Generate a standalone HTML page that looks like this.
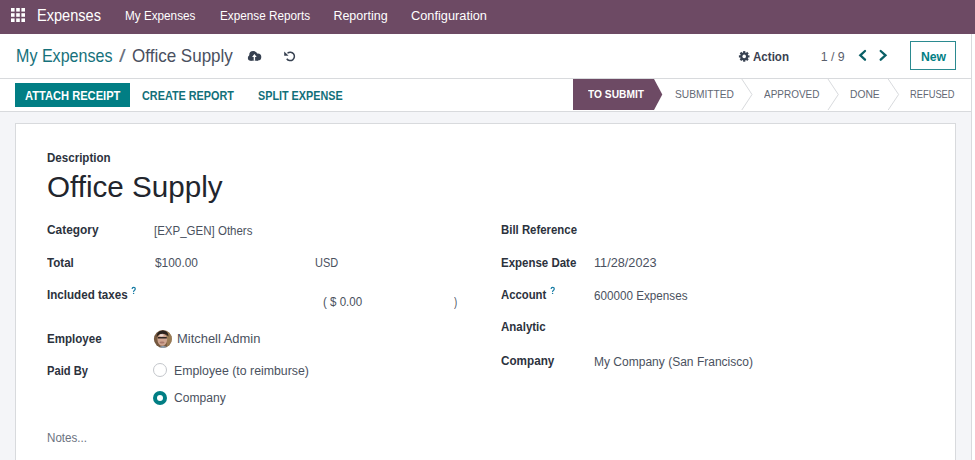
<!DOCTYPE html>
<html><head><meta charset="utf-8">
<style>
html,body{margin:0;padding:0;width:975px;height:460px;overflow:hidden;background:#fff;font-family:"Liberation Sans",sans-serif;}
.t{position:absolute;white-space:nowrap;transform-origin:0 50%;}
.a{position:absolute;}
</style></head><body>
<!-- navbar -->
<div class="a" style="left:0;top:0;width:975px;height:34px;background:#6D4A64;"></div>
<svg class="a" style="left:0;top:0" width="60" height="34">
  <g fill="#fff">
    <rect x="11" y="8" width="3.6" height="3.6"/><rect x="16.2" y="8" width="3.6" height="3.6"/><rect x="21.4" y="8" width="3.6" height="3.6"/>
    <rect x="11" y="13.2" width="3.6" height="3.6"/><rect x="16.2" y="13.2" width="3.6" height="3.6"/><rect x="21.4" y="13.2" width="3.6" height="3.6"/>
    <rect x="11" y="18.4" width="3.6" height="3.6"/><rect x="16.2" y="18.4" width="3.6" height="3.6"/><rect x="21.4" y="18.4" width="3.6" height="3.6"/>
  </g>
</svg>
<!-- control panel borders -->
<div class="a" style="left:0;top:78px;width:971px;height:1px;background:#D8DADD;"></div>
<div class="a" style="left:0;top:111px;width:971px;height:1px;background:#D8DADD;"></div>
<!-- gray background -->
<div class="a" style="left:0;top:112px;width:971px;height:348px;background:#F4F5F8;"></div>
<!-- right scrollbar line -->
<div class="a" style="left:971px;top:34px;width:1px;height:426px;background:#D8DADD;"></div>
<!-- sheet -->
<div class="a" style="left:15px;top:123px;width:939px;height:400px;background:#fff;border:1px solid #D8DADD;"></div>
<!-- icons overlay -->
<svg class="a" style="left:0;top:0" width="975" height="460" viewBox="0 0 975 460">
  <g fill="#374151">
    <circle cx="253.3" cy="55.2" r="4.1"/>
    <circle cx="257.8" cy="57" r="3.5"/>
    <circle cx="250.6" cy="58" r="2.7"/>
    <rect x="250.6" y="56" width="7.4" height="4.7"/>
  </g>
  <path d="M254.4 54 L252.1 57 L253.7 57 L253.7 60.8 L255.1 60.8 L255.1 57 L256.7 57 Z" fill="#fff"/>
  <path d="M287.5 53.2 A4.2 4.2 0 1 1 286.76 58.8" fill="none" stroke="#374151" stroke-width="1.5"/>
  <path d="M284.2 51.6 L284.2 55.8 L288.6 55.8 Z" fill="#374151"/>
  <g transform="translate(744.2 56.4)" fill="#374151">
    <circle r="3.9"/>
    <rect x="-1.1" y="-5.3" width="2.2" height="10.6"/>
    <rect x="-1.1" y="-5.3" width="2.2" height="10.6" transform="rotate(45)"/>
    <rect x="-1.1" y="-5.3" width="2.2" height="10.6" transform="rotate(90)"/>
    <rect x="-1.1" y="-5.3" width="2.2" height="10.6" transform="rotate(135)"/>
  </g>
  <circle cx="744.2" cy="56.4" r="1.8" fill="#fff"/>
  <path d="M865 51 L860.3 55.3 L865 59.7" fill="none" stroke="#0A5F66" stroke-width="2.3" stroke-linecap="round"/>
  <path d="M880.7 51 L885.5 55.3 L880.7 59.7" fill="none" stroke="#0A5F66" stroke-width="2.3" stroke-linecap="round"/>
  <g id="qm" fill="none" stroke="#147AA3" stroke-width="1.15">
    <path d="M551.1 289 Q551.1 287.3 552.7 287.3 Q554.3 287.3 554.3 288.8 Q554.3 289.8 553.3 290.4 Q552.6 290.9 552.6 291.9"/>
  </g>
  <circle cx="552.6" cy="293.4" r="0.7" fill="#147AA3"/>
  <g transform="translate(-419 0)">
    <path d="M551.1 289 Q551.1 287.3 552.7 287.3 Q554.3 287.3 554.3 288.8 Q554.3 289.8 553.3 290.4 Q552.6 290.9 552.6 291.9" fill="none" stroke="#147AA3" stroke-width="1.15"/>
    <circle cx="552.6" cy="293.4" r="0.7" fill="#147AA3"/>
  </g>
</svg>
<!-- New button -->
<div class="a" style="left:910px;top:41px;width:44px;height:27px;border:1px solid #2B8A90;"></div>
<!-- ATTACH RECEIPT -->
<div class="a" style="left:15px;top:83px;width:115px;height:24px;background:#017E84;"></div>
<!-- status bar -->
<svg class="a" style="left:560px;top:79px" width="411" height="32" viewBox="0 0 411 32">
  <path d="M13 0 L94 0 L102.3 15.5 L94 31 L13 31 Z" fill="#6D4A64"/>
  <path d="M181.8 0 L192 15.5 L181.8 31" fill="none" stroke="#D8DADD" stroke-width="1"/>
  <path d="M268 0 L278.3 15.5 L268 31" fill="none" stroke="#D8DADD" stroke-width="1"/>
  <path d="M328.2 0 L338.6 15.5 L328.2 31" fill="none" stroke="#D8DADD" stroke-width="1"/>
</svg>
<!-- superscripts -->
<!-- avatar -->
<svg class="a" style="left:150px;top:327px" width="26" height="24" viewBox="0 0 26 24">
  <defs>
    <clipPath id="c"><circle cx="12.9" cy="12" r="9"/></clipPath>
    <radialGradient id="bgg" cx="0.5" cy="0.5" r="0.6"><stop offset="0" stop-color="#8E6C4C"/><stop offset="1" stop-color="#5C4431"/></radialGradient>
  </defs>
  <g clip-path="url(#c)">
    <rect width="26" height="24" fill="url(#bgg)"/>
    <path d="M16 4 L22 4 L22 20 L17 20 Z" fill="#A88A5C" opacity="0.7"/>
    <ellipse cx="12.3" cy="12.5" rx="4.8" ry="6.3" fill="#CFA591"/>
    <path d="M6.5 10 Q7 3.5 12.8 3.5 Q18.5 3.5 18.5 9.5 Q16.5 6.8 12.8 6.8 Q9 6.8 6.5 10 Z" fill="#2A221D"/>
    <rect x="8" y="10" width="8.8" height="1.5" fill="#2F2622"/>
    <ellipse cx="11.5" cy="8.3" rx="2.2" ry="1.1" fill="#EADBD3"/>
    <ellipse cx="12" cy="15.5" rx="2.5" ry="1" fill="#A8786A"/>
    <path d="M7 24 Q9 19 13 19 Q18.5 19 20 24 Z" fill="#8FA3B5"/>
  </g>
</svg>
<!-- radios -->
<div class="a" style="left:153px;top:363px;width:12px;height:12px;border:1px solid #C3C6CB;border-radius:50%;background:#fff;"></div>
<div class="a" style="left:153px;top:391px;width:14px;height:14px;border-radius:50%;background:#017E84;"></div>
<div class="a" style="left:157px;top:395px;width:6px;height:6px;border-radius:50%;background:#fff;"></div>
<div class="t" style="left:37.00px;top:5.30px;font-size:17.01px;line-height:21px;color:#fff;transform:scaleX(0.8573);">Expenses</div>
<div class="t" style="left:125.00px;top:8.17px;font-size:12.50px;line-height:16px;color:#fff;transform:scaleX(0.9379);">My Expenses</div>
<div class="t" style="left:220.00px;top:8.17px;font-size:12.50px;line-height:16px;color:#fff;transform:scaleX(0.9387);">Expense Reports</div>
<div class="t" style="left:333.40px;top:8.17px;font-size:12.50px;line-height:16px;color:#fff;">Reporting</div>
<div class="t" style="left:410.80px;top:8.17px;font-size:12.50px;line-height:16px;color:#fff;transform:scaleX(1.0218);">Configuration</div>
<div class="t" style="left:15.90px;top:44.50px;font-size:18.46px;line-height:22px;color:#16717B;transform:scaleX(0.8715);">My Expenses</div>
<div class="t" style="left:119.00px;top:44.50px;font-size:18.46px;line-height:22px;color:#6B7280;transform:scaleX(1.2963);">/</div>
<div class="t" style="left:132.40px;top:44.50px;font-size:18.46px;line-height:22px;color:#4A5060;transform:scaleX(0.9227);">Office Supply</div>
<div class="t" style="left:753.20px;top:48.72px;font-size:12.35px;line-height:16px;color:#3A4150;font-weight:700;transform:scaleX(0.9369);">Action</div>
<div class="t" style="left:820.70px;top:48.72px;font-size:12.35px;line-height:16px;color:#5A606C;">1 / 9</div>
<div class="t" style="left:920.60px;top:48.72px;font-size:12.06px;line-height:16px;color:#017E84;font-weight:700;transform:scaleX(1.0140);">New</div>
<div class="t" style="left:24.60px;top:87.72px;font-size:12.65px;line-height:17px;color:#fff;font-weight:700;transform:scaleX(0.8798);">ATTACH RECEIPT</div>
<div class="t" style="left:142.40px;top:87.72px;font-size:12.65px;line-height:17px;color:#12707A;font-weight:700;transform:scaleX(0.8579);">CREATE REPORT</div>
<div class="t" style="left:257.50px;top:87.72px;font-size:12.65px;line-height:17px;color:#12707A;font-weight:700;transform:scaleX(0.8549);">SPLIT EXPENSE</div>
<div class="t" style="left:588.00px;top:85.97px;font-size:11.63px;line-height:16px;color:#fff;font-weight:700;transform:scaleX(0.8788);">TO SUBMIT</div>
<div class="t" style="left:674.70px;top:85.97px;font-size:11.63px;line-height:16px;color:#626874;transform:scaleX(0.8779);">SUBMITTED</div>
<div class="t" style="left:764.10px;top:85.97px;font-size:11.63px;line-height:16px;color:#626874;transform:scaleX(0.8577);">APPROVED</div>
<div class="t" style="left:850.10px;top:85.97px;font-size:11.63px;line-height:16px;color:#626874;transform:scaleX(0.8838);">DONE</div>
<div class="t" style="left:910.40px;top:85.97px;font-size:11.63px;line-height:16px;color:#626874;transform:scaleX(0.8024);">REFUSED</div>
<div class="t" style="left:47.20px;top:149.97px;font-size:12.21px;line-height:16px;color:#2C323D;font-weight:700;transform:scaleX(0.9471);">Description</div>
<div class="t" style="left:47.00px;top:169.52px;font-size:29.94px;line-height:34px;color:#22252D;transform:scaleX(0.9890);">Office Supply</div>
<div class="t" style="left:47.00px;top:220.96px;font-size:13.08px;line-height:17px;color:#2C323D;font-weight:700;transform:scaleX(0.9082);">Category</div>
<div class="t" style="left:153.80px;top:221.76px;font-size:13.08px;line-height:17px;color:#4A515E;transform:scaleX(0.8796);">[EXP_GEN] Others</div>
<div class="t" style="left:47.00px;top:253.66px;font-size:13.08px;line-height:17px;color:#2C323D;font-weight:700;transform:scaleX(0.8850);">Total</div>
<div class="t" style="left:154.50px;top:253.66px;font-size:13.08px;line-height:17px;color:#4A515E;transform:scaleX(0.9093);">$100.00</div>
<div class="t" style="left:314.80px;top:253.66px;font-size:13.08px;line-height:17px;color:#4A515E;transform:scaleX(0.8405);">USD</div>
<div class="t" style="left:47.00px;top:285.96px;font-size:13.08px;line-height:17px;color:#2C323D;font-weight:700;transform:scaleX(0.8883);">Included taxes</div>
<div class="t" style="left:323.20px;top:293.82px;font-size:12.35px;line-height:16px;color:#4A515E;transform:scaleX(0.9360);">( $ 0.00</div>
<div class="t" style="left:453.80px;top:293.82px;font-size:12.35px;line-height:16px;color:#4A515E;transform:scaleX(0.7732);">)</div>
<div class="t" style="left:47.20px;top:329.76px;font-size:13.08px;line-height:17px;color:#2C323D;font-weight:700;transform:scaleX(0.8834);">Employee</div>
<div class="t" style="left:177.00px;top:330.06px;font-size:13.08px;line-height:17px;color:#4A515E;transform:scaleX(0.9892);">Mitchell Admin</div>
<div class="t" style="left:47.00px;top:361.96px;font-size:13.08px;line-height:17px;color:#2C323D;font-weight:700;transform:scaleX(0.8540);">Paid By</div>
<div class="t" style="left:173.60px;top:361.96px;font-size:13.08px;line-height:17px;color:#4A515E;transform:scaleX(0.9425);">Employee (to reimburse)</div>
<div class="t" style="left:173.60px;top:389.26px;font-size:13.08px;line-height:17px;color:#4A515E;transform:scaleX(0.9234);">Company</div>
<div class="t" style="left:47.00px;top:430.47px;font-size:12.50px;line-height:16px;color:#6B7280;transform:scaleX(0.9289);">Notes...</div>
<div class="t" style="left:501.10px;top:220.96px;font-size:13.08px;line-height:17px;color:#2C323D;font-weight:700;transform:scaleX(0.8710);">Bill Reference</div>
<div class="t" style="left:501.00px;top:254.26px;font-size:13.08px;line-height:17px;color:#2C323D;font-weight:700;transform:scaleX(0.8775);">Expense Date</div>
<div class="t" style="left:593.70px;top:254.26px;font-size:13.08px;line-height:17px;color:#4A515E;transform:scaleX(0.9707);">11/28/2023</div>
<div class="t" style="left:501.00px;top:286.46px;font-size:13.08px;line-height:17px;color:#2C323D;font-weight:700;transform:scaleX(0.8657);">Account</div>
<div class="t" style="left:593.70px;top:287.06px;font-size:13.08px;line-height:17px;color:#4A515E;transform:scaleX(0.8929);">600000 Expenses</div>
<div class="t" style="left:501.00px;top:318.46px;font-size:13.08px;line-height:17px;color:#2C323D;font-weight:700;transform:scaleX(0.8784);">Analytic</div>
<div class="t" style="left:501.00px;top:352.26px;font-size:13.08px;line-height:17px;color:#2C323D;font-weight:700;transform:scaleX(0.8945);">Company</div>
<div class="t" style="left:593.70px;top:353.06px;font-size:13.08px;line-height:17px;color:#4A515E;transform:scaleX(0.9191);">My Company (San Francisco)</div>
</body></html>
